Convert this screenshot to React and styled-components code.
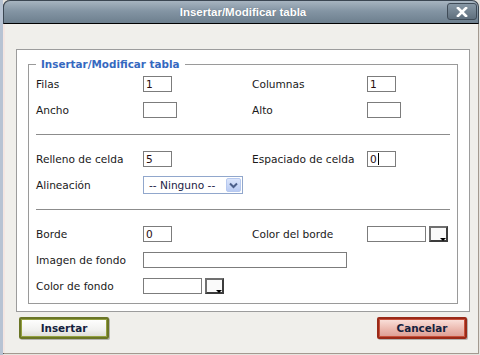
import React from "react";
import styled, { createGlobalStyle } from "styled-components";

const GlobalStyle = createGlobalStyle`
  html, body {
    margin: 0;
    padding: 0;
  }
  body {
    width: 480px;
    height: 355px;
    overflow: hidden;
    background: linear-gradient(90deg, #b7c3d3 0px, #b7c3d3 3px, #e6e3de 3px);
    font-family: "DejaVu Sans", Verdana, sans-serif;
  }
`

const Window = styled.div`
  box-sizing: border-box;
  margin-left: 3px;
  width: 476px;
  height: 354px;
  border-left: 1px solid #111;
  border-right: 1px solid #a39a90;
  border-bottom: 1px solid #a39a90;
  border-radius: 7px 7px 0 0;
  background: #f0efeb;
  display: flex;
  flex-direction: column;
`

const TitleBar = styled.div`
  box-sizing: border-box;
  height: 24px;
  margin-left: -1px;
  margin-right: -1px;
  border: 1px solid #3b4652;
  border-bottom-color: #000;
  border-radius: 7px 7px 0 0;
  background: linear-gradient(#a7b4c0 0%, #8495a4 45%, #6d7f8e 100%);
  display: flex;
  align-items: center;
  justify-content: center;
  position: relative;
`

const Title = styled.div`
  font-family: "Liberation Sans", Arial, sans-serif;
  font-weight: bold;
  font-size: 11.5px;
  color: #fff;
  padding-left: 4px;
  text-shadow: 0 0 1px rgba(40, 50, 60, 0.4);
`

const CloseButton = styled.div`
  position: absolute;
  right: 1px;
  top: 2px;
  box-sizing: border-box;
  width: 30px;
  height: 17px;
  border: 1px solid #3f4b57;
  border-radius: 3px;
  background: linear-gradient(#8797a5, #5f6f7d);
  display: flex;
  align-items: center;
  justify-content: center;
`

const Body = styled.div`
  flex: 1;
  padding: 25px 8px 0 12px;
  border-left: 2px solid #f3e6e2;
  margin-left: -1px;
`

const Panel = styled.div`
  box-sizing: border-box;
  width: 454px;
  height: 263px;
  margin-left: -1px;
  background: #fff;
  border: 1px solid #9c9c9c;
  padding: 7px 11px 0 11px;
`

const Fieldset = styled.fieldset`
  margin: 0;
  padding: 0 7px 4px 7px;
  border: 1px solid #9a9a9a;
  min-width: 0;
`

const Legend = styled.legend`
  padding: 0 5px;
  font-weight: bold;
  font-size: 10.4px;
  line-height: 14px;
  color: #3568c0;
`

const Grid = styled.div`
  display: grid;
  grid-template-columns: 107px 109px 115px 1fr;
  grid-auto-rows: 26px;
  align-items: center;
`

const Label = styled.div`
  font-size: 10.6px;
  color: #1a1a1a;
  white-space: nowrap;
  grid-column: ${(p) => p.span || "auto"};
`

const Cell = styled.div`
  display: flex;
  align-items: center;
  gap: 3px;
  grid-column: ${(p) => p.span || "auto"};
`

const Input = styled.div`
  box-sizing: border-box;
  width: ${(p) => p.w}px;
  height: 16px;
  border: 1px solid #7c7c7c;
  background: #fff;
  font-size: 10.6px;
  line-height: 14px;
  padding-left: 2px;
  color: #2a1010;
  display: flex;
  align-items: center;
`

const Caret = styled.span`
  display: inline-block;
  width: 1px;
  height: 12px;
  margin-left: 1px;
  background: #000;
`

const Rule = styled.div`
  height: 1px;
  background: #8c8c8c;
  margin: 11px 0 11px 0;
`

const Select = styled.div`
  box-sizing: border-box;
  width: 100px;
  height: 18px;
  border: 1px solid #91a7cc;
  background: #fff;
  display: flex;
  align-items: center;
  padding: 1px;
`

const SelectText = styled.div`
  flex: 1;
  font-size: 10.6px;
  color: #222244;
  padding-left: 4px;
  white-space: nowrap;
`

const SelectArrow = styled.div`
  box-sizing: border-box;
  width: 15px;
  height: 14px;
  border: 1px solid #b7c9ef;
  border-radius: 2px;
  background: linear-gradient(#dbe5fb, #b9cbf3);
  display: flex;
  align-items: center;
  justify-content: center;
`

const ColorButton = styled.div`
  box-sizing: border-box;
  width: 19px;
  height: 16px;
  border: 2px solid;
  border-color: #707070 #3c3c3c #3c3c3c #707070;
  background: #fafafa;
  position: relative;
  &::after {
    content: "";
    position: absolute;
    right: 0px;
    bottom: -1px;
    border-left: 3px solid transparent;
    border-right: 3px solid transparent;
    border-top: 3px solid #000;
  }
`

const ButtonRow = styled.div`
  display: flex;
  justify-content: space-between;
  margin-top: 5px;
  padding: 0 3px 0 2px;
`

const Button = styled.div`
  box-sizing: border-box;
  width: 90px;
  height: 22px;
  border: 2px solid ${(p) => (p.danger ? "#9a2a18" : "#6a7526")};
  outline: 1px solid ${(p) => (p.danger ? "#c7503a" : "#93a040")};
  outline-offset: -3px;
  border-radius: 2px;
  background: ${(p) =>
    p.danger
      ? "linear-gradient(#fbe2dc, #eab6ac 60%, #dc9d92)"
      : "linear-gradient(#ffffff, #f1f1ef 60%, #dcdcd6)"};
  font-weight: bold;
  font-size: 10.4px;
  color: #14213d;
  display: flex;
  align-items: center;
  justify-content: center;
  box-shadow: 1px 1px 0 rgba(0, 0, 0, 0.25);
`

function App() {
  return (
    <>
      <GlobalStyle />
      <Window>
        <TitleBar>
          <Title>Insertar/Modificar tabla</Title>
          <CloseButton>
            <svg width="12" height="10" viewBox="0 0 12 10">
              <path d="M2 1 L10 9 M10 1 L2 9" stroke="#fff" strokeWidth="2.6" strokeLinecap="square" />
            </svg>
          </CloseButton>
        </TitleBar>
        <Body>
          <Panel>
            <Fieldset>
              <Legend>Insertar/Modificar tabla</Legend>
              <Grid>
                <Label>Filas</Label>
                <Cell><Input w={29}>1</Input></Cell>
                <Label>Columnas</Label>
                <Cell><Input w={29}>1</Input></Cell>
                <Label>Ancho</Label>
                <Cell><Input w={34} /></Cell>
                <Label>Alto</Label>
                <Cell><Input w={34} /></Cell>
              </Grid>
              <Rule />
              <Grid>
                <Label>Relleno de celda</Label>
                <Cell><Input w={29}>5</Input></Cell>
                <Label>Espaciado de celda</Label>
                <Cell><Input w={29}>0<Caret /></Input></Cell>
                <Label>Alineación</Label>
                <Cell span="2 / 5">
                  <Select>
                    <SelectText>-- Ninguno --</SelectText>
                    <SelectArrow>
                      <svg width="9" height="7" viewBox="0 0 9 7">
                        <path d="M1 1.5 L4.5 5 L8 1.5" fill="none" stroke="#4c5f8a" strokeWidth="2" />
                      </svg>
                    </SelectArrow>
                  </Select>
                </Cell>
              </Grid>
              <Rule />
              <Grid>
                <Label>Borde</Label>
                <Cell><Input w={29}>0</Input></Cell>
                <Label>Color del borde</Label>
                <Cell><Input w={59} /><ColorButton /></Cell>
                <Label>Imagen de fondo</Label>
                <Cell span="2 / 5"><Input w={204} /></Cell>
                <Label>Color de fondo</Label>
                <Cell span="2 / 5"><Input w={59} /><ColorButton /></Cell>
              </Grid>
            </Fieldset>
          </Panel>
          <ButtonRow>
            <Button>Insertar</Button>
            <Button danger>Cancelar</Button>
          </ButtonRow>
        </Body>
      </Window>
    </>
  );
}

export default App;
